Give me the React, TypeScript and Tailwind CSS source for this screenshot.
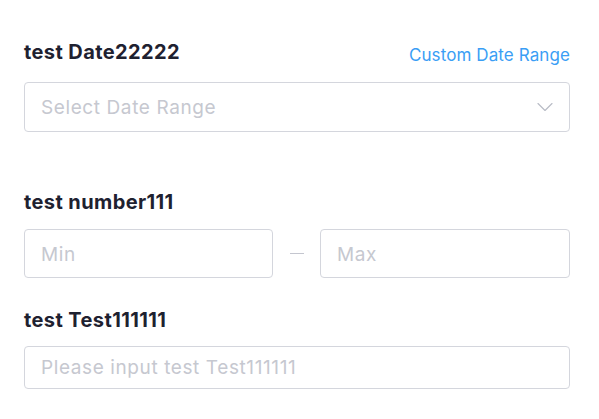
import { ChevronDown } from "lucide-react";

const font = { fontFamily: "Inter, 'Noto Sans', sans-serif" };

function Label({ children }: { children: React.ReactNode }) {
  return (
    <div className="text-[20px] font-bold leading-6 tracking-[0.4px] text-[#1e2130]">{children}</div>
  );
}

export default function App() {
  return (
    <div className="min-h-[419px] w-[599px] bg-white pl-6 pr-[29px] pt-[40px]" style={font}>
      {/* date range */}
      <div className="flex h-6 items-start justify-between">
        <Label>test Date22222</Label>
        <span className="pt-[3px] text-[17px] leading-6 tracking-[0.1px] text-[#3a9ef5]">Custom Date Range</span>
      </div>
      <div className="mt-[18px] flex h-[50px] items-center justify-between rounded-[4px] border border-[#d4d6dd] pl-4 pr-[10px]">
        <span className="pt-[3px] text-[19px] tracking-[0.6px] text-[#c6c8d0]">Select Date Range</span>
        <ChevronDown className="h-7 w-7 text-[#b9bcc6]" strokeWidth={1} />
      </div>

      {/* number range */}
      <div className="mt-[58px]">
        <Label>test number111</Label>
      </div>
      <div className="mt-[15px] flex items-center">
        <div className="flex h-[49px] w-[249px] items-center rounded-[4px] border border-[#d4d6dd] pl-4 pt-[3px]">
          <span className="text-[19px] tracking-[0.6px] text-[#c6c8d0]">Min</span>
        </div>
        <div className="flex flex-1 justify-center">
          <div className="h-px w-[14px] bg-[#c4c6cf]" />
        </div>
        <div className="flex h-[49px] w-[250px] items-center rounded-[4px] border border-[#d4d6dd] pl-4 pt-[3px]">
          <span className="text-[19px] tracking-[0.6px] text-[#c6c8d0]">Max</span>
        </div>
      </div>

      {/* text input */}
      <div className="mt-[30px]">
        <Label>test Test111111</Label>
      </div>
      <div className="mt-[14px] flex h-[43px] items-center rounded-[4px] border border-[#d4d6dd] pl-4 pt-[2px]">
        <span className="text-[19px] tracking-[0.6px] text-[#c6c8d0]">Please input test Test111111</span>
      </div>
    </div>
  );
}
